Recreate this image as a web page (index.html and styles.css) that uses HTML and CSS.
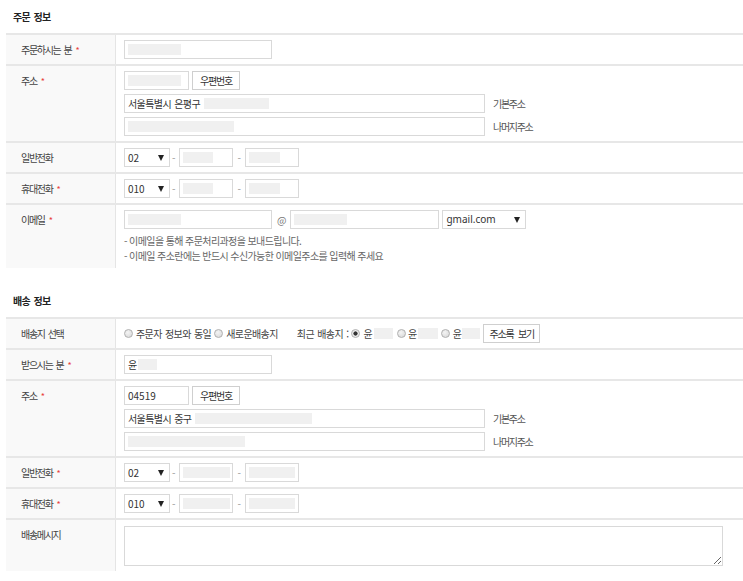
FILE: index.html
```html
<!DOCTYPE html>
<html lang="ko">
<head>
<meta charset="utf-8">
<title>주문 정보</title>
<link rel="stylesheet" href="styles.css">
</head>
<body>
<div class="page">
  <section class="sec">
    <h2 class="sec-title">주문 정보</h2>
    <div class="tbl">
      <div class="row">
        <div class="lbl">주문하시는 분<i class="req">*</i></div>
        <div class="cnt">
          <div class="line"><div class="box w148"><span class="blur b53"></span></div></div>
        </div>
      </div>
      <div class="row">
        <div class="lbl">주소<i class="req">*</i></div>
        <div class="cnt">
          <div class="line"><div class="box w65"><span class="blur b53"></span></div><button class="btn bw48">우편번호</button></div>
          <div class="line"><div class="box w361">서울특별시 은평구<span class="blur b65 ml4"></span></div><span class="side">기본주소</span></div>
          <div class="line"><div class="box w361"><span class="blur b106"></span></div><span class="side">나머지주소</span></div>
        </div>
      </div>
      <div class="row">
        <div class="lbl">일반전화</div>
        <div class="cnt">
          <div class="line">
            <div class="box sel w46"><span class="num">02</span><span class="arr"></span></div>
            <span class="dash d1">-</span>
            <div class="box w54"><span class="blur b30"></span></div>
            <span class="dash d2">-</span>
            <div class="box w54"><span class="blur b31"></span></div>
          </div>
        </div>
      </div>
      <div class="row">
        <div class="lbl">휴대전화<i class="req">*</i></div>
        <div class="cnt">
          <div class="line">
            <div class="box sel w46"><span class="num">010</span><span class="arr"></span></div>
            <span class="dash d1">-</span>
            <div class="box w54"><span class="blur b30"></span></div>
            <span class="dash d2">-</span>
            <div class="box w54"><span class="blur b31"></span></div>
          </div>
        </div>
      </div>
      <div class="row">
        <div class="lbl">이메일<i class="req">*</i></div>
        <div class="cnt">
          <div class="line">
            <div class="box w148"><span class="blur b53"></span></div>
            <span class="at">@</span>
            <div class="box w149"><span class="blur b53"></span></div>
            <div class="box sel w84 ml3"><span class="en">gmail.com</span><span class="arr"></span></div>
          </div>
          <div class="notes">
            <p>- 이메일을 통해 주문처리과정을 보내드립니다.</p>
            <p>- 이메일 주소란에는 반드시 수신가능한 이메일주소를 입력해 주세요</p>
          </div>
        </div>
      </div>
    </div>
  </section>

  <section class="sec sec2">
    <h2 class="sec-title">배송 정보</h2>
    <div class="tbl">
      <div class="row">
        <div class="lbl">배송지 선택</div>
        <div class="cnt">
          <div class="line">
            <span class="rd"></span><span class="rtxt">주문자 정보와 동일</span>
            <span class="rd ml3"></span><span class="rtxt">새로운배송지</span>
            <span class="recent">최근 배송지 :</span>
            <span class="rd on ml3"></span><span class="rtxt">윤</span><span class="blur b19 ml2"></span>
            <span class="rd ml4"></span><span class="rtxt t2">윤</span><span class="blur b20 ml1"></span>
            <span class="rd ml3"></span><span class="rtxt">윤</span><span class="blur b18 ml1"></span>
            <button class="btn bw57 ml5">주소록 보기</button>
          </div>
        </div>
      </div>
      <div class="row">
        <div class="lbl">받으시는 분<i class="req">*</i></div>
        <div class="cnt">
          <div class="line"><div class="box w148">윤<span class="blur b19 ml1"></span></div></div>
        </div>
      </div>
      <div class="row">
        <div class="lbl">주소<i class="req">*</i></div>
        <div class="cnt">
          <div class="line"><div class="box w65"><span class="num">04519</span></div><button class="btn bw48">우편번호</button></div>
          <div class="line"><div class="box w361">서울특별시 중구<span class="blur b117 ml4"></span></div><span class="side">기본주소</span></div>
          <div class="line"><div class="box w361"><span class="blur b117"></span></div><span class="side">나머지주소</span></div>
        </div>
      </div>
      <div class="row">
        <div class="lbl">일반전화<i class="req">*</i></div>
        <div class="cnt">
          <div class="line">
            <div class="box sel w46"><span class="num">02</span><span class="arr"></span></div>
            <span class="dash d1">-</span>
            <div class="box w54"><span class="blur b47"></span></div>
            <span class="dash d2">-</span>
            <div class="box w54"><span class="blur b46"></span></div>
          </div>
        </div>
      </div>
      <div class="row">
        <div class="lbl">휴대전화<i class="req">*</i></div>
        <div class="cnt">
          <div class="line">
            <div class="box sel w46"><span class="num">010</span><span class="arr"></span></div>
            <span class="dash d1">-</span>
            <div class="box w54"><span class="blur b47"></span></div>
            <span class="dash d2">-</span>
            <div class="box w54"><span class="blur b46"></span></div>
          </div>
        </div>
      </div>
      <div class="row">
        <div class="lbl">배송메시지</div>
        <div class="cnt cnt-msg">
          <textarea class="msg" aria-label="배송메시지"></textarea>
        </div>
      </div>
    </div>
  </section>
</div>
</body>
</html>
```

FILE: styles.css
```css
html, body {
  margin: 0;
  padding: 0;
  background: #fff;
}
body {
  font-family: "Noto Sans CJK KR", "Noto Sans", sans-serif;
  font-size: 10px;
  color: #333;
  letter-spacing: -0.6px;
  word-spacing: 1px;
}
.page {
  padding-left: 6px;
}
.sec-title {
  margin: 0;
  height: 33px;
  line-height: 34px;
  font-size: 10px;
  font-weight: bold;
  padding-left: 7px;
  color: #222;
}
.sec2 {
  margin-top: 16px;
}
.row {
  display: grid;
  grid-template-columns: 110px 1fr;
  border-top: 2px solid #e7e7e7;
}
.lbl {
  background: #f9f9f9;
  border-right: 1px solid #e5e5e5;
  padding: 5px 0 0 15px;
  line-height: 19px;
  color: #444;
  letter-spacing: -1.3px;
  word-spacing: 1.5px;
}
.req {
  font-style: normal;
  color: #e8413b;
  font-size: 9px;
  margin-left: 4px;
  letter-spacing: 0;
}
.cnt {
  padding: 5px 8px;
  display: flex;
  flex-direction: column;
  gap: 4px;
}
.cnt-msg {
  padding-top: 6px;
}
.line {
  display: flex;
  align-items: center;
  height: 19px;
}
.box {
  height: 19px;
  box-sizing: border-box;
  border: 1px solid #d9d9d9;
  background: #fff;
  display: flex;
  align-items: center;
  padding: 0 3px;
  line-height: 17px;
  color: #333;
  white-space: nowrap;
}
.sel {
  justify-content: space-between;
  padding-right: 5px;
}
.arr {
  width: 0;
  height: 0;
  border-left: 3px solid transparent;
  border-right: 3px solid transparent;
  border-top: 6px solid #222;
}
.w46 { width: 46px; }
.w54 { width: 54px; }
.w65 { width: 65px; }
.w84 { width: 84px; }
.w148 { width: 148px; }
.w149 { width: 149px; }
.w361 { width: 361px; }

.blur {
  display: inline-block;
  height: 11px;
  background: #f0f0f0;
  flex: none;
}
.b18 { width: 18px; }
.b19 { width: 19px; }
.b20 { width: 20px; }
.b30 { width: 30px; }
.b31 { width: 31px; }
.b46 { width: 46px; }
.b47 { width: 47px; }
.b53 { width: 53px; }
.b65 { width: 65px; }
.b106 { width: 106px; }
.b117 { width: 117px; }

.ml1 { margin-left: 1px; }
.ml2 { margin-left: 2px; }
.ml3 { margin-left: 3px; }
.ml4 { margin-left: 4px; }
.ml5 { margin-left: 5px; }

.num, .en {
  letter-spacing: 0;
}
.en {
  font-family: "Noto Sans", "Noto Sans CJK KR", sans-serif;
}
.btn {
  height: 19px;
  box-sizing: border-box;
  border: 1px solid #cfcfcf;
  background: #fff;
  padding: 0;
  margin: 0 0 0 3px;
  font: inherit;
  letter-spacing: -1.2px;
  word-spacing: 3px;
  color: #333;
  line-height: 17px;
  text-align: center;
}
.bw48 { width: 48px; }
.bw57 { width: 57px; }

.side {
  margin-left: 8px;
  color: #555;
  letter-spacing: -1.3px;
}
.dash {
  color: #999;
  letter-spacing: 0;
}
.d1 { margin: 0 4px 0 2px; }
.d2 { margin: 0 4px 0 4px; }
.at {
  color: #777;
  letter-spacing: 0;
  margin: 0 4px 0 5px;
}
.notes {
  color: #666;
  line-height: 15px;
  word-spacing: 0;
}
.notes p {
  margin: 0;
}

.rd {
  display: inline-block;
  width: 9px;
  height: 9px;
  box-sizing: border-box;
  border-radius: 50%;
  border: 1px solid #b0b0b0;
  background: radial-gradient(circle at 40% 35%, #f4f4f4 0, #d6d6d6 100%);
  flex: none;
}
.rd.on {
  background: radial-gradient(circle, #333 0, #333 1.8px, #ececec 2.4px);
}
.rtxt {
  margin-left: 3px;
  color: #444;
}
.t2 {
  margin-left: 2px;
}
.recent {
  margin-left: 19px;
  color: #444;
}
.msg {
  display: block;
  width: 599px;
  height: 40px;
  box-sizing: border-box;
  border: 1px solid #d9d9d9;
  margin: 0;
  padding: 3px;
  font: inherit;
  resize: both;
  background: #fff;
}
```
